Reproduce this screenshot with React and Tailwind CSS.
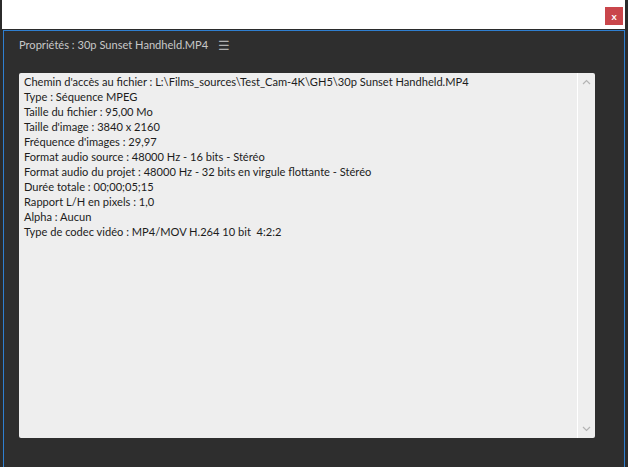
const lines = [
  "Chemin d'accès au fichier : L:\\Films_sources\\Test_Cam-4K\\GH5\\30p Sunset Handheld.MP4",
  "Type : Séquence MPEG",
  "Taille du fichier : 95,00 Mo",
  "Taille d'image : 3840 x 2160",
  "Fréquence d'images : 29,97",
  "Format audio source : 48000 Hz - 16 bits - Stéréo",
  "Format audio du projet : 48000 Hz - 32 bits en virgule flottante - Stéréo",
  "Durée totale : 00;00;05;15",
  "Rapport L/H en pixels : 1,0",
  "Alpha : Aucun",
  "Type de codec vidéo : MP4/MOV H.264 10 bit  4:2:2",
];

function App() {
  return (
    <div
      className="w-[628px] h-[467px] bg-[#2b2b2b] flex flex-col overflow-hidden"
      style={{ fontFamily: 'Lato, "Noto Sans", sans-serif' }}
    >
      {/* window top bar */}
      <div className="h-[29px] ml-[2px] mr-[3px] bg-white flex justify-end items-start pt-[7px] pr-[2px]">
        <button className="w-[18px] h-[18px] bg-[#c9464b] text-white text-[10px] font-bold leading-none flex items-center justify-center">
          x
        </button>
      </div>

      {/* properties panel */}
      <div className="flex-1 mt-[1px] ml-[3px] mr-[3px] border border-b-0 border-[#2f7fd0] bg-[#2e2e2e] flex flex-col">
        <div className="h-[28px] flex items-center pl-[15px] pt-[1px] text-[11.1px] text-[#c8c8c8]">
          <span>Propriétés : 30p Sunset Handheld.MP4</span>
          <span className="ml-[10px] text-[13px] text-[#b0b0b0]">☰</span>
        </div>

        <div className="mt-[14px] ml-[15px] w-[576px] h-[365px] bg-[#eeeeee] rounded-[2px] flex">
          <div className="flex-1 pl-[5px] pt-[1px] text-[11.1px] leading-[15px] text-[#1c1c1c] whitespace-pre">
            {lines.map((l) => (
              <div key={l}>{l}</div>
            ))}
          </div>
          <div className="w-[18px] border-l border-white flex flex-col justify-between items-center py-[6px]">
            <svg width="9" height="6" viewBox="0 0 9 6">
              <path d="M1 5 L4.5 1.5 L8 5" stroke="#b4b4b4" strokeWidth="1.2" fill="none" />
            </svg>
            <svg width="9" height="6" viewBox="0 0 9 6">
              <path d="M1 1 L4.5 4.5 L8 1" stroke="#b4b4b4" strokeWidth="1.2" fill="none" />
            </svg>
          </div>
        </div>
      </div>
    </div>
  );
}

export default App;
